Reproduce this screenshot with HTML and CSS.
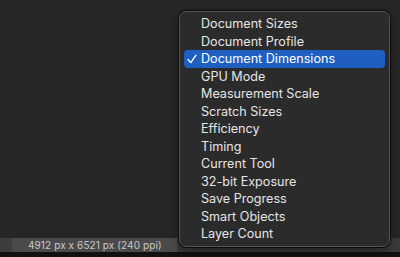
FILE: index.html
```html
<!DOCTYPE html>
<html lang="en">
<head>
  <meta charset="UTF-8">
  <title>Status Bar Menu</title>
  <link rel="stylesheet" href="styles.css">
</head>
<body>
  <div class="workspace">
    <div class="canvas-area"></div>
    <div class="status-bar">
      <div class="status-gap"></div>
      <div class="status-info">4912 px x 6521 px (240 ppi)</div>
      <div class="status-arrow"></div>
    </div>
    <div class="bottom-strip"></div>

    <ul class="popup-menu">
      <li>Document Sizes</li>
      <li>Document Profile</li>
      <li class="selected">
        <svg class="check" width="10" height="10" viewBox="0 0 10 10"><polyline points="1,5.5 3.8,8.6 9,1.2" fill="none" stroke="#fff" stroke-width="1.4" stroke-linecap="round" stroke-linejoin="round"/></svg>
        Document Dimensions
      </li>
      <li>GPU Mode</li>
      <li>Measurement Scale</li>
      <li>Scratch Sizes</li>
      <li>Efficiency</li>
      <li>Timing</li>
      <li>Current Tool</li>
      <li>32-bit Exposure</li>
      <li>Save Progress</li>
      <li>Smart Objects</li>
      <li>Layer Count</li>
    </ul>
  </div>
</body>
</html>
```

FILE: styles.css
```css
body {
  margin: 0;
  background-color: #262626;
  font-family: Inter, 'Liberation Sans', sans-serif;
}

.workspace {
  position: relative;
  width: 400px;
  height: 257px;
  display: flex;
  flex-direction: column;
  overflow: hidden;
}

.canvas-area {
  flex: 1;
  background-color: #262626;
}

.status-bar {
  height: 14px;
  display: flex;
  background-color: #3a3a3a;
}

.status-gap {
  width: 12px;
  background-color: #3d3d3d;
}

.status-info {
  width: 165px;
  background-color: #4a4a4a;
  color: #c9c9c9;
  font-size: 10px;
  letter-spacing: 0.1px;
  line-height: 14px;
  padding-left: 16px;
  box-sizing: border-box;
}

.status-arrow {
  flex: 1;
  background-color: #3a3a3a;
}

.bottom-strip {
  height: 5px;
  background-color: #111;
}

.popup-menu {
  position: absolute;
  left: 179px;
  top: 11px;
  width: 211px;
  height: 236px;
  box-sizing: border-box;
  margin: 0;
  padding: 3px 4px;
  list-style: none;
  background-color: #2b2b2b;
  border: 1px solid #545454;
  border-radius: 7px;
  box-shadow: 0 0 0 1px #0c0c0c, 0 4px 10px rgba(0,0,0,0.4);
}

.popup-menu li {
  position: relative;
  height: 17.5px;
  line-height: 17.5px;
  padding-left: 17px;
  border-radius: 4px;
  color: #e6e6e6;
  font-size: 12.6px;
}

.popup-menu li.selected {
  background-color: #1f5fc2;
  color: #fff;
}

.check {
  position: absolute;
  left: 3px;
  top: 4px;
}
```
